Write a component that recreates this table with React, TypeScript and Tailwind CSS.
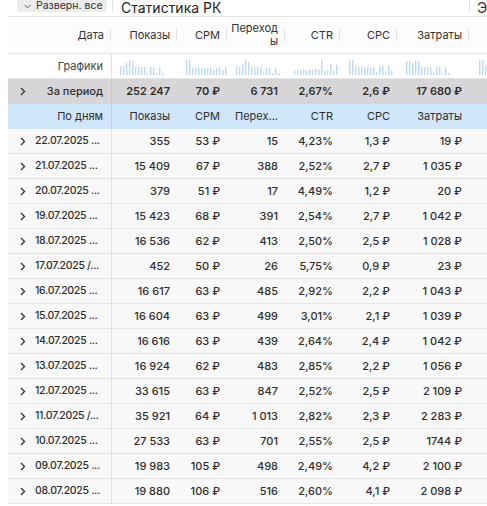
import { ChevronDown } from 'lucide-react';

const cols = 'grid grid-cols-[104px_66px_50px_58px_55px_57px_72px_1fr]';

const rows: string[][] = [
  ['22.07.2025 ...', '355', '53 ₽', '15', '4,23%', '1,3 ₽', '19 ₽'],
  ['21.07.2025 ...', '15 409', '67 ₽', '388', '2,52%', '2,7 ₽', '1 035 ₽'],
  ['20.07.2025 ...', '379', '51 ₽', '17', '4,49%', '1,2 ₽', '20 ₽'],
  ['19.07.2025 ...', '15 423', '68 ₽', '391', '2,54%', '2,7 ₽', '1 042 ₽'],
  ['18.07.2025 ...', '16 536', '62 ₽', '413', '2,50%', '2,5 ₽', '1 028 ₽'],
  ['17.07.2025 /...', '452', '50 ₽', '26', '5,75%', '0,9 ₽', '23 ₽'],
  ['16.07.2025 ...', '16 617', '63 ₽', '485', '2,92%', '2,2 ₽', '1 043 ₽'],
  ['15.07.2025 ...', '16 604', '63 ₽', '499', '3,01%', '2,1 ₽', '1 039 ₽'],
  ['14.07.2025 ...', '16 616', '63 ₽', '439', '2,64%', '2,4 ₽', '1 042 ₽'],
  ['13.07.2025 ...', '16 924', '62 ₽', '483', '2,85%', '2,2 ₽', '1 056 ₽'],
  ['12.07.2025 ...', '33 615', '63 ₽', '847', '2,52%', '2,5 ₽', '2 109 ₽'],
  ['11.07.2025 /...', '35 921', '64 ₽', '1 013', '2,82%', '2,3 ₽', '2 283 ₽'],
  ['10.07.2025 ...', '27 533', '63 ₽', '701', '2,55%', '2,5 ₽', '1744 ₽'],
  ['09.07.2025 ...', '19 983', '105 ₽', '498', '2,49%', '4,2 ₽', '2 100 ₽'],
  ['08.07.2025 ...', '19 880', '106 ₽', '516', '2,60%', '4,1 ₽', '2 098 ₽'],
];

const num = (s: string) => parseFloat(s.replace(/[^\d,]/g, '').replace(',', '.'));

// oldest first for the little charts
const series = [1, 2, 3, 4, 5, 6].map((c) => rows.map((r) => num(r[c])).reverse());

function Spark({ data }: { data: number[] }) {
  const max = Math.max(...data);
  const min = Math.min(...data);
  return (
    <svg width="48" height="16" className="block">
      {data.map((v, i) => {
        const h = 2 + ((v - min * 0.7) / (max - min * 0.7 || 1)) * 13;
        return <rect key={i} x={i * 3} y={16 - h} width="1.4" height={h} fill="#bcd8f3" />;
      })}
    </svg>
  );
}

function Chevron() {
  return (
    <svg width="6" height="9" viewBox="0 0 6 9" className="shrink-0">
      <path d="M1 1l3.5 3.5L1 8" fill="none" stroke="#333" strokeWidth="1.3" />
    </svg>
  );
}

function HeadCell({ children }: { children: React.ReactNode }) {
  return (
    <div className="flex items-center justify-end gap-[6px] pr-[1px]">
      <span className="text-right leading-[13px]">{children}</span>
      <span className="h-[12px] w-px bg-[#e2e2e2]" />
    </div>
  );
}

export default function App() {
  return (
    <div
      className="w-[487px] h-[506px] overflow-hidden bg-white text-[11px] text-[#2e2e2e]"
      style={{ fontFamily: 'Inter, "Noto Sans", sans-serif' }}
    >
      {/* top bar, scrolled partly out of view */}
      <div className="h-[17px] ml-[8px] border-b border-[#e6e6e6] flex items-start">
        <div className="w-[104px] flex pl-[9px]">
          <div className="h-[12px] rounded-b-[4px] bg-[#ececec] flex items-center gap-[3px] pl-[5px] pr-[4px] text-[10.5px] leading-[12px] whitespace-nowrap">
            <ChevronDown size={11} strokeWidth={1.6} />
            <span>Разверн. все</span>
          </div>
        </div>
        <div className="h-[12px] w-px bg-[#e2e2e2]" />
        <div className="flex-1 pl-[8px] text-[14px] leading-[16px] text-[#222]">Статистика РК</div>
        <div className="h-[12px] w-px bg-[#e2e2e2]" />
        <div className="w-[17px] pl-[7px] text-[14px] leading-[16px]">Э</div>
      </div>

      <div className="ml-[8px]">
        {/* header */}
        <div className={`${cols} h-[37px] border-b border-[#e6e6e6] bg-[#fcfcfc] text-[#333]`}>
          <div className="flex items-center justify-end gap-[6px] pr-[1px]">
            <span>Дата</span>
            <span className="h-[12px] w-px bg-[#e2e2e2]" />
          </div>
          <HeadCell>Показы</HeadCell>
          <HeadCell>CPM</HeadCell>
          <HeadCell>
            Переход
            <br />ы
          </HeadCell>
          <HeadCell>CTR</HeadCell>
          <HeadCell>CPC</HeadCell>
          <HeadCell>Затраты</HeadCell>
          <div />
        </div>

        {/* charts */}
        <div className={`${cols} h-[25px] border-b border-[#e6e6e6] bg-white`}>
          <div className="flex items-center justify-end pr-[8px] border-r border-[#e2e2e2] text-[#444]">Графики</div>
          {series.map((d, i) => (
            <div key={i} className="flex items-end pl-[8px] pb-[3px]">
              <Spark data={d} />
            </div>
          ))}
          <div className="flex items-end pl-[9px] pb-[3px]">
            <Spark data={series[5].slice(0, 3)} />
          </div>
        </div>

        {/* period total */}
        <div className={`${cols} h-[25px] bg-[#d8d5d9] font-semibold`}>
          <div className="flex items-center justify-between pl-[12px] pr-[8px] border-r border-[#c8c5c9] font-medium">
            <Chevron />
            <span>За период</span>
          </div>
          {['252 247', '70 ₽', '6 731', '2,67%', '2,6 ₽', '17 680 ₽'].map((v, i) => (
            <div key={i} className="flex items-center justify-end pr-[8px]">
              {v}
            </div>
          ))}
          <div />
        </div>

        {/* by days header */}
        <div className={`${cols} h-[25px] bg-[#cfe6fb]`}>
          <div className="flex items-center justify-end pr-[8px] border-r border-[#bcd6ee]">По дням</div>
          {['Показы', 'CPM', 'Перех...', 'CTR', 'CPC', 'Затраты'].map((v, i) => (
            <div key={i} className="flex items-center justify-end pr-[8px]">
              {v}
            </div>
          ))}
          <div />
        </div>

        {rows.map((r) => (
          <div key={r[0]} className={`${cols} h-[25px] border-b border-[#e4e4e4] bg-[#f8f8f8] font-medium`}>
            <div className="flex items-center gap-[9px] pl-[12px] border-r border-[#e2e2e2] overflow-hidden">
              <Chevron />
              <span className="text-[10.5px] tracking-[-0.3px] whitespace-nowrap">{r[0]}</span>
            </div>
            {r.slice(1).map((v, i) => (
              <div key={i} className="flex items-center justify-end pr-[8px]">
                {v}
              </div>
            ))}
            <div />
          </div>
        ))}
      </div>
    </div>
  );
}
